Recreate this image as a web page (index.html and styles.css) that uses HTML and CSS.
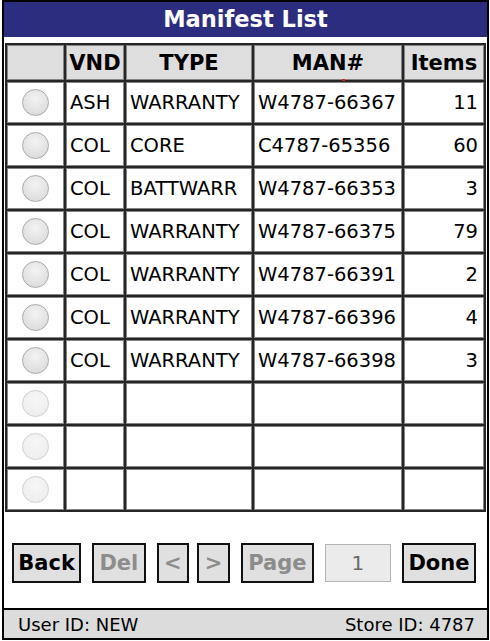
FILE: index.html
```html
<!DOCTYPE html>
<html>
<head>
<meta charset="utf-8">
<link rel="stylesheet" href="styles.css">
</head>
<body>
<div class="frame">
  <div class="title">Manifest List</div>
  <table class="grid">
    <thead>
      <tr>
        <th class="c1"></th>
        <th class="c2">VND</th>
        <th class="c3">TYPE</th>
        <th class="c4">MAN#<span class="dot"></span></th>
        <th class="c5">Items</th>
      </tr>
    </thead>
    <tbody>
      <tr><td class="sel"><span class="radio"></span></td><td>ASH</td><td>WARRANTY</td><td>W4787-66367</td><td class="num">11</td></tr>
      <tr><td class="sel"><span class="radio"></span></td><td>COL</td><td>CORE</td><td>C4787-65356</td><td class="num">60</td></tr>
      <tr><td class="sel"><span class="radio"></span></td><td>COL</td><td>BATTWARR</td><td>W4787-66353</td><td class="num">3</td></tr>
      <tr><td class="sel"><span class="radio"></span></td><td>COL</td><td>WARRANTY</td><td>W4787-66375</td><td class="num">79</td></tr>
      <tr><td class="sel"><span class="radio"></span></td><td>COL</td><td>WARRANTY</td><td>W4787-66391</td><td class="num">2</td></tr>
      <tr><td class="sel"><span class="radio"></span></td><td>COL</td><td>WARRANTY</td><td>W4787-66396</td><td class="num">4</td></tr>
      <tr><td class="sel"><span class="radio"></span></td><td>COL</td><td>WARRANTY</td><td>W4787-66398</td><td class="num">3</td></tr>
      <tr><td class="sel"><span class="radio off"></span></td><td></td><td></td><td></td><td class="num"></td></tr>
      <tr><td class="sel"><span class="radio off"></span></td><td></td><td></td><td></td><td class="num"></td></tr>
      <tr><td class="sel"><span class="radio off"></span></td><td></td><td></td><td></td><td class="num"></td></tr>
    </tbody>
  </table>
  <div class="buttons">
    <button class="btn b-back">Back</button>
    <button class="btn b-del dis">Del</button>
    <button class="btn b-arrow dis">&lt;</button>
    <button class="btn b-arrow b-next dis">&gt;</button>
    <button class="btn b-page dis">Page</button>
    <input class="pagebox" type="text" value="1" disabled>
    <button class="btn b-done">Done</button>
  </div>
  <div class="footer">
    <span>User ID: NEW</span>
    <span>Store ID: 4787</span>
  </div>
</div>
</body>
</html>
```

FILE: styles.css
```css
* { box-sizing: border-box; }
html, body { margin: 0; padding: 0; background: #fff; }
body { font-family: "DejaVu Sans", Verdana, sans-serif; color: #000; }

.frame {
  margin-left: 2px;
  width: 487px;
  height: 640px;
  border: 2px solid #000;
  display: flex;
  flex-direction: column;
}

.title {
  height: 35px;
  background: #2d2d7f;
  color: #fff;
  font-weight: bold;
  font-size: 22.5px;
  line-height: 35px;
  text-align: center;
}

.grid {
  margin: 6px 0 0 1px;
  width: 481px;
  table-layout: fixed;
  border-collapse: separate;
  border-spacing: 2px;
  background: #262626;
}
.grid th, .grid td {
  border: 1px solid #858585;
  padding: 0;
  overflow: hidden;
  white-space: nowrap;
}
.grid th {
  height: 35px;
  background: #dedede;
  font-weight: bold;
  font-size: 21px;
  text-align: center;
}
.grid th.c4 { position: relative; overflow: visible; }
.dot {
  position: absolute;
  left: 87px;
  bottom: -2px;
  width: 3px;
  height: 2px;
  background: #e0202a;
}
.grid td {
  height: 41px;
  background: #fff;
  font-size: 19.5px;
  padding-left: 3px;
}
.grid .c1 { width: 57px; }
.grid .c2 { width: 58px; }
.grid .c3 { width: 126px; }
.grid .c4 { width: 148px; }
.grid .c5 { width: 80px; }
.grid td.num { text-align: right; padding-left: 0; padding-right: 5px; }
.grid td.sel { text-align: center; padding-left: 0; }

.radio {
  display: inline-block;
  vertical-align: middle;
  width: 27px;
  height: 27px;
  border-radius: 50%;
  border: 1px solid #a9a9a9;
  background: radial-gradient(circle at 50% 35%, #f3f3f3 0%, #e2e2e2 60%, #d6d6d6 100%);
}
.radio.off {
  border-color: #cfcfcf;
  background: radial-gradient(circle at 50% 35%, #f7f7f7 0%, #efefef 70%, #e8e8e8 100%);
}

.buttons {
  display: flex;
  align-items: center;
  margin-top: 31px;
  padding-left: 8px;
  height: 40px;
}
.btn {
  height: 40px;
  border: 2px solid #111;
  background: #e0e0e0;
  font-family: "DejaVu Sans", Verdana, sans-serif;
  font-weight: bold;
  font-size: 21px;
  color: #000;
  padding: 0;
  margin: 0 11px 0 0;
  border-radius: 0;
}
.btn.dis { color: #8c8c8c; }
.b-back { width: 70px; }
.b-del { width: 54px; }
.b-arrow { width: 33px; margin-right: 8px; }
.b-next { margin-right: 11px; }
.b-page { width: 74px; }
.b-done { width: 75px; }
.pagebox {
  width: 66px;
  height: 38px;
  border: 1px solid #b4b4b4;
  background: #ebebeb;
  color: #6a6a6a;
  font-family: "DejaVu Sans", Verdana, sans-serif;
  font-size: 20px;
  text-align: center;
  margin: 0 11px 0 0;
  padding: 0;
}

.footer {
  margin-top: auto;
  border-top: 2px solid #000;
  background: #dcdcdc;
  height: 30px;
  display: flex;
  justify-content: space-between;
  align-items: center;
  padding: 0 12px 0 14px;
  font-size: 18px;
}
```
